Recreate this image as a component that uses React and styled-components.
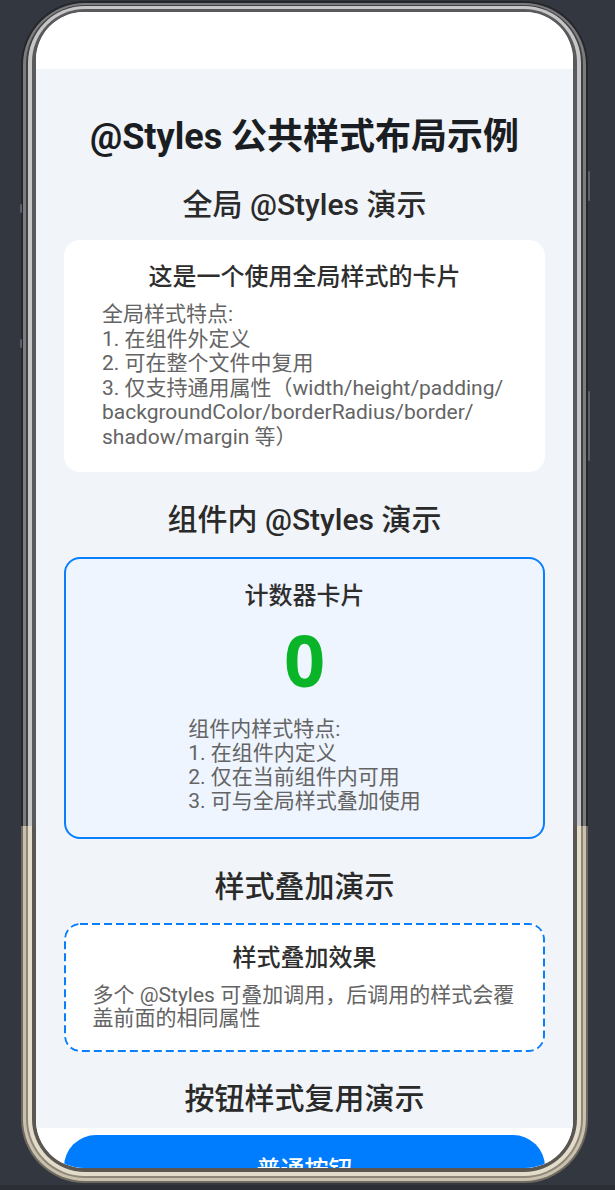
import React from "react";
import styled, { createGlobalStyle, css } from "styled-components";

const Global = createGlobalStyle`
  html, body { margin: 0; padding: 0; background: #333740; }
  body { font-family: Roboto, "Noto Sans CJK SC", sans-serif; }
  * { box-sizing: border-box; }
`;

const GRAY_SPLIT = 826;
const ZW = "\u200B";

const dashedSvg = encodeURIComponent(
  "<svg xmlns='http://www.w3.org/2000/svg' width='100%' height='100%'>" +
    "<rect x='1' y='1' rx='15' ry='15' style='width:calc(100% - 2px);height:calc(100% - 2px)' " +
    "fill='none' stroke='#0a7ffc' stroke-width='2' stroke-dasharray='8 4'/></svg>"
);

const Stage = styled.div`
  width: 615px;
  height: 1190px;
  display: flex;
  flex-direction: column;
  overflow: hidden;
`;

const StageBody = styled.div`
  flex: none;
  height: 1185px;
  padding: 1px 0 0 21px;
`;

const BottomStrip = styled.div`
  flex: 1;
  background: #2b2e35;
`;

const Ring = styled.div`
  position: relative;
  border-radius: ${(p) => p.$r}px;
  padding: ${(p) => p.$pad};
  background: linear-gradient(
    to bottom,
    ${(p) => p.$gray} ${GRAY_SPLIT}px,
    ${(p) => p.$gold} ${GRAY_SPLIT}px
  );
  background-attachment: fixed;
`;

const PhoneRing = styled(Ring)`
  width: 567px;
`;

const SideKey = styled.div`
  position: absolute;
  width: 2px;
  border-radius: 1px;
  background: #5c6068;
  top: ${(p) => p.$top}px;
  height: ${(p) => p.$h}px;
  ${(p) => (p.$side === "left" ? "left: -1px;" : "right: -2px;")}
`;

const Screen = styled.div`
  height: 1156px;
  border-radius: 48px;
  overflow: hidden;
  background: #ffffff;
  display: flex;
  flex-direction: column;
`;

const StatusBar = styled.div`
  flex: none;
  height: 57px;
  background: #ffffff;
`;

const Content = styled.div`
  flex: none;
  background: #f1f4f8;
  display: flex;
  flex-direction: column;
  align-items: center;
  padding: 0 27px 9px;
`;

const PageTitle = styled.h1`
  margin: 44px 0 0;
  font-size: 36px;
  line-height: 48px;
  font-weight: 700;
  color: #1a1d22;
  text-align: center;
`;

const SectionTitle = styled.h2`
  margin: ${(p) => p.$mt}px 0 0;
  font-size: 30px;
  line-height: 40px;
  font-weight: 500;
  color: #2a2a2a;
  text-align: center;
`;

const variants = {
  plain: css`
    background: #ffffff;
  `,
  accent: css`
    background: #eef5fe;
    border: 2px solid #0a7ffc;
  `,
  dashed: css`
    background: #ffffff url("data:image/svg+xml,${dashedSvg}") no-repeat;
    background-size: 100% 100%;
    border: 2px solid transparent;
    background-origin: border-box;
  `,
};

const Card = styled.div`
  width: 481px;
  margin-top: ${(p) => p.$mt}px;
  border-radius: 16px;
  display: flex;
  flex-direction: column;
  align-items: center;
  padding: ${(p) => p.$pad};
  ${(p) => variants[p.$variant || "plain"]}
`;

const CardTitle = styled.div`
  font-size: 24px;
  line-height: 32px;
  font-weight: 500;
  color: #2e2e2e;
  text-align: center;
`;

const Body = styled.div`
  width: ${(p) => (p.$w ? `${p.$w}px` : "fit-content")};
  margin-top: ${(p) => p.$mt}px;
  font-size: 21px;
  line-height: ${(p) => p.$lh}px;
  color: #646464;
  text-align: left;
  white-space: pre-line;
`;

const Counter = styled.div`
  margin-top: 3px;
  font-family: "Noto Sans", sans-serif;
  font-size: 72px;
  line-height: 88px;
  font-weight: 700;
  color: #0ab428;
`;

const Footer = styled.div`
  flex: 1;
  background: #ffffff;
  display: flex;
  flex-direction: column;
  align-items: center;
  padding-top: 7px;
`;

const PrimaryButton = styled.button`
  width: 481px;
  height: 64px;
  flex: none;
  border: none;
  border-radius: 32px;
  background: #007dff;
  color: #ffffff;
  font-family: inherit;
  font-size: 24px;
  font-weight: 500;
`;

const globalText = [
  "全局样式特点:",
  "1. 在组件外定义",
  "2. 可在整个文件中复用",
  `3. 仅支持通用属性（width/${ZW}height/${ZW}padding/${ZW}backgroundColor/${ZW}borderRadius/${ZW}border/${ZW}shadow/${ZW}margin 等）`,
].join("\n");

const localText = [
  "组件内样式特点:",
  "1. 在组件内定义",
  "2. 仅在当前组件内可用",
  "3. 可与全局样式叠加使用",
].join("\n");

export default function App() {
  return (
    <Stage>
      <Global />
      <StageBody>
        <PhoneRing $r={64} $pad="2px" $gray="#26272a" $gold="#6f6a60">
          <SideKey $side="left" $top={203} $h={9} />
          <SideKey $side="left" $top={338} $h={9} />
          <SideKey $side="right" $top={170} $h={30} />
          <SideKey $side="right" $top={390} $h={70} />
          <Ring $r={62} $pad="2px 3px 3px" $gray="#7c7c7e" $gold="#c9c1ae">
            <Ring $r={59} $pad="1px 2px 2px" $gray="#404042" $gold="#8f8878">
              <Ring $r={57} $pad="3px 4px 4px" $gray="#c6c6c8" $gold="#e4dccb">
                <Ring $r={53} $pad="3px 4px 4px" $gray="#5a5a5c" $gold="#5a5752">
                  <Screen>
                    <StatusBar />
                    <Content>
                      <PageTitle>@Styles 公共样式布局示例</PageTitle>
                      <SectionTitle $mt={24}>全局 @Styles 演示</SectionTitle>
                      <Card $mt={15} $pad="21px 20px 23px">
                        <CardTitle>这是一个使用全局样式的卡片</CardTitle>
                        <Body $w={405} $mt={9} $lh={24.5}>
                          {globalText}
                        </Body>
                      </Card>
                      <SectionTitle $mt={28}>组件内 @Styles 演示</SectionTitle>
                      <Card $mt={17} $variant="accent" $pad="21px 20px 24px">
                        <CardTitle>计数器卡片</CardTitle>
                        <Counter>0</Counter>
                        <Body $mt={14} $lh={24}>
                          {localText}
                        </Body>
                      </Card>
                      <SectionTitle $mt={28}>样式叠加演示</SectionTitle>
                      <Card $mt={16} $variant="dashed" $pad="17px 20px 20px">
                        <CardTitle>样式叠加效果</CardTitle>
                        <Body $w={424} $mt={10} $lh={23}>
                          {"多个 @Styles 可叠加调用，后调用的样式会覆盖前面的相同属性"}
                        </Body>
                      </Card>
                      <SectionTitle $mt={27}>按钮样式复用演示</SectionTitle>
                    </Content>
                    <Footer>
                      <PrimaryButton>普通按钮</PrimaryButton>
                    </Footer>
                  </Screen>
                </Ring>
              </Ring>
            </Ring>
          </Ring>
        </PhoneRing>
      </StageBody>
      <BottomStrip />
    </Stage>
  );
}
